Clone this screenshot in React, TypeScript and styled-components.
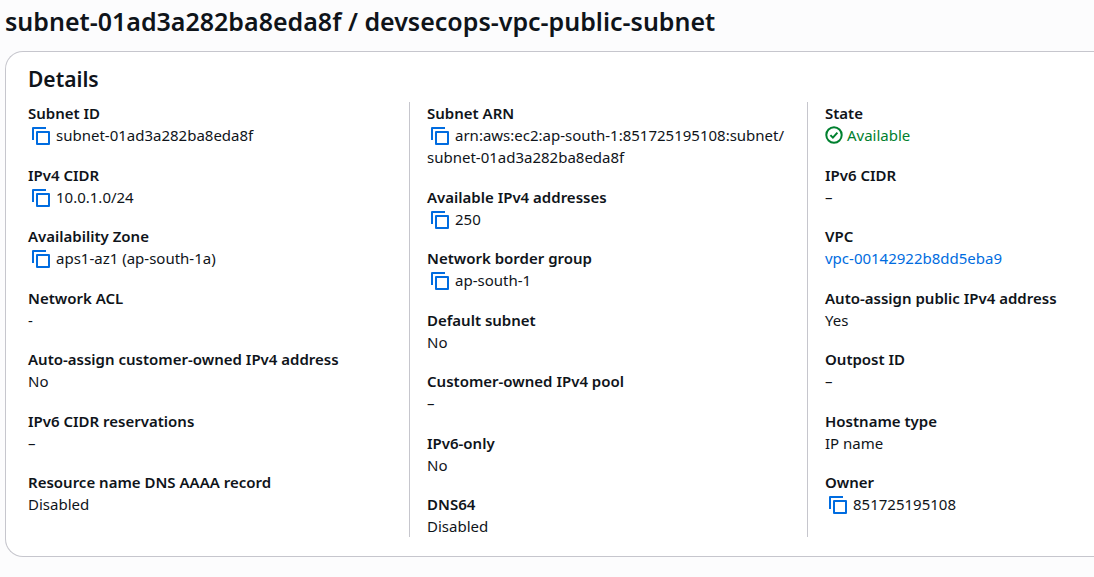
import React from "react";
import styled, { createGlobalStyle } from "styled-components";

const GlobalStyle = createGlobalStyle`
  * { box-sizing: border-box; }
  body {
    margin: 0;
    background: #fcfcfd;
    color: #0f141a;
    font-family: "Noto Sans", "Open Sans", sans-serif;
    font-size: 15px;
    line-height: 22px;
    overflow-x: hidden;
  }
`;

const Page = styled.main`
  padding: 3px 0 20px 5px;
`;

const Title = styled.h1`
  margin: 0 0 12px;
  font-size: 25px;
  line-height: 36px;
  font-weight: 600;
`;

const Panel = styled.section`
  padding: 13px 0 19px 22px;
  background: #ffffff;
  border: 1px solid #c6c6cd;
  border-right: 0;
  border-radius: 18px 0 0 18px;
`;

const PanelTitle = styled.h2`
  margin: 0 0 9px;
  font-size: 21px;
  line-height: 28px;
  font-weight: 600;
`;

const Columns = styled.div`
  display: grid;
  grid-template-columns: 381fr 398fr 287fr;
  min-height: 435px;
`;

const Column = styled.dl<{ $first?: boolean; $full?: boolean }>`
  display: flex;
  flex-direction: column;
  justify-content: space-between;
  min-width: 0;
  margin: 0;
  padding: 0 0 ${(p) => (p.$full ? 0 : 22)}px ${(p) => (p.$first ? 0 : 17)}px;
  border-left: ${(p) => (p.$first ? "0" : "1px solid #c6c6cd")};
`;

const Label = styled.dt`
  font-weight: 600;
`;

const Value = styled.dd`
  margin: 0;
`;

const CopyButton = styled.button`
  display: inline-flex;
  margin: 0 6px 0 4px;
  padding: 0;
  border: 0;
  background: none;
  color: #006ce0;
  vertical-align: -4px;
  cursor: pointer;
`;

const Status = styled.span`
  display: flex;
  align-items: center;
  gap: 4px;
  color: #00802f;
`;

const Link = styled.a`
  color: #006ce0;
  text-decoration: none;
`;

function Copy({ name }: { name: string }) {
  return (
    <CopyButton type="button" aria-label={`Copy ${name}`}>
      <svg width="18" height="18" viewBox="0 0 18 18" fill="none" stroke="currentColor" strokeWidth="2" strokeLinejoin="round">
        <path d="M14 1H1v12" />
        <path d="M5 5h12v12H5z" />
      </svg>
    </CopyButton>
  );
}

function Field({ label, copy, children }: { label: string; copy?: boolean; children: React.ReactNode }) {
  return (
    <div>
      <Label>{label}</Label>
      <Value>
        {copy && <Copy name={label} />}
        {children}
      </Value>
    </div>
  );
}

export default function App() {
  return (
    <Page>
      <GlobalStyle />
      <Title>subnet-01ad3a282ba8eda8f / devsecops-vpc-public-subnet</Title>
      <Panel>
        <PanelTitle>Details</PanelTitle>
        <Columns>
          <Column $first>
            <Field label="Subnet ID" copy>subnet-01ad3a282ba8eda8f</Field>
            <Field label="IPv4 CIDR" copy>10.0.1.0/24</Field>
            <Field label="Availability Zone" copy>aps1-az1 (ap-south-1a)</Field>
            <Field label="Network ACL">-</Field>
            <Field label="Auto-assign customer-owned IPv4 address">No</Field>
            <Field label="IPv6 CIDR reservations">–</Field>
            <Field label="Resource name DNS AAAA record">Disabled</Field>
          </Column>
          <Column $full>
            <Field label="Subnet ARN" copy>
              arn:aws:ec2:ap-south-1:851725195108:subnet/
              <br />
              subnet-01ad3a282ba8eda8f
            </Field>
            <Field label="Available IPv4 addresses" copy>250</Field>
            <Field label="Network border group" copy>ap-south-1</Field>
            <Field label="Default subnet">No</Field>
            <Field label="Customer-owned IPv4 pool">–</Field>
            <Field label="IPv6-only">No</Field>
            <Field label="DNS64">Disabled</Field>
          </Column>
          <Column>
            <Field label="State">
              <Status>
                <svg width="18" height="18" viewBox="0 0 18 18" fill="none" stroke="currentColor" strokeWidth="2" aria-hidden="true">
                  <circle cx="9" cy="9" r="7.7" />
                  <path d="M5.4 9.1l2.5 2.5 4.5-5" />
                </svg>
                Available
              </Status>
            </Field>
            <Field label="IPv6 CIDR">–</Field>
            <Field label="VPC"><Link href="#vpc">vpc-00142922b8dd5eba9</Link></Field>
            <Field label="Auto-assign public IPv4 address">Yes</Field>
            <Field label="Outpost ID">–</Field>
            <Field label="Hostname type">IP name</Field>
            <Field label="Owner" copy>851725195108</Field>
          </Column>
        </Columns>
      </Panel>
    </Page>
  );
}
